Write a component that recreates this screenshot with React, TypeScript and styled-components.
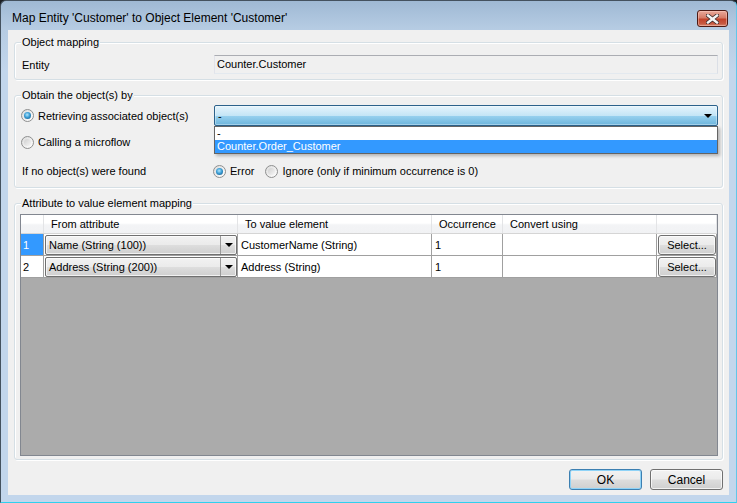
import React from "react";
import styled, { createGlobalStyle } from "styled-components";

/* ─────────────────── data ─────────────────── */

const COLUMNS = [
  { title: "", width: 23 },
  { title: "From attribute", width: 194 },
  { title: "To value element", width: 194 },
  { title: "Occurrence", width: 71 },
  { title: "Convert using", width: 154 },
  { title: "", width: 60 },
];

const gridCols = COLUMNS.map((c) => `${c.width}px`).join(" ");

const rows = [
  { from: "Name (String (100))", to: "CustomerName (String)", occurrence: "1", selected: true },
  { from: "Address (String (200))", to: "Address (String)", occurrence: "1", selected: false },
];

/* ─────────────────── component ─────────────────── */

export default function App() {
  return (
    <>
      <GlobalStyle />
      <Window>
        <TitleBar>
          <Title>Map Entity 'Customer' to Object Element 'Customer'</Title>
          <CloseButton aria-label="Close">
            <svg width="13" height="10" viewBox="0 0 13 10">
              <path d="M2 1.5 L11 8.5 M11 1.5 L2 8.5" stroke="#3b2a2a" strokeWidth="4" strokeLinecap="square" />
              <path d="M2 1.5 L11 8.5 M11 1.5 L2 8.5" stroke="#f4f4f4" strokeWidth="2.4" strokeLinecap="square" />
            </svg>
          </CloseButton>
        </TitleBar>

        <Client>
          {/* object mapping */}
          <Group $pl={7}>
            <Legend>Object mapping</Legend>
            <FormRow>
              <span>Entity</span>
              <TextField>Counter.Customer</TextField>
            </FormRow>
          </Group>

          {/* obtain by */}
          <Group $pl={7} $pt={2} $pb={6}>
            <Legend>Obtain the object(s) by</Legend>
            <FormRow $h={21}>
              <RadioLabel>
                <Radio $checked />
                Retrieving associated object(s)
              </RadioLabel>
              <ComboWrap>
                <OpenCombo>
                  <span>-</span>
                  <Caret />
                </OpenCombo>
                <DropList>
                  <DropItem>-</DropItem>
                  <DropItem $active>Counter.Order_Customer</DropItem>
                </DropList>
              </ComboWrap>
            </FormRow>
            <FormRow $h={20} $mt={6}>
              <RadioLabel>
                <Radio />
                Calling a microflow
              </RadioLabel>
              <span />
            </FormRow>
            <FormRow $h={20} $mt={9}>
              <span>If no object(s) were found</span>
              <RadioGroup>
                <RadioLabel>
                  <Radio $checked />
                  Error
                </RadioLabel>
                <RadioLabel>
                  <Radio />
                  Ignore (only if minimum occurrence is 0)
                </RadioLabel>
              </RadioGroup>
            </FormRow>
          </Group>

          {/* attribute mapping */}
          <Group $pl={5} $pt={3} $pb={3} $grow>
            <Legend $ml={2}>Attribute to value element mapping</Legend>
            <DataGrid>
              <HeaderRow>
                {COLUMNS.map((c, i) => (
                  <HeaderCell key={i}>{c.title}</HeaderCell>
                ))}
              </HeaderRow>
              {rows.map((r, i) => (
                <DataRow key={i}>
                  <RowHeader $selected={r.selected}>{i + 1}</RowHeader>
                  <Cell $pad={0}>
                    <CellCombo>
                      <span>{r.from}</span>
                      <CellComboArrow>
                        <Caret />
                      </CellComboArrow>
                    </CellCombo>
                  </Cell>
                  <Cell>{r.to}</Cell>
                  <Cell>{r.occurrence}</Cell>
                  <Cell />
                  <Cell $pad={0}>
                    <SelectButton>Select...</SelectButton>
                  </Cell>
                </DataRow>
              ))}
              <EmptyArea />
            </DataGrid>
          </Group>

          <ButtonBar>
            <DialogButton $default>OK</DialogButton>
            <DialogButton>Cancel</DialogButton>
          </ButtonBar>
        </Client>
      </Window>
    </>
  );
}

/* ───────────── styled components ───────────── */

const GlobalStyle = createGlobalStyle`
  html, body {
    margin: 0;
    padding: 0;
    background: #1b1f24;
  }
  body {
    font-family: "Liberation Sans", Arial, sans-serif;
    font-size: 11px;
    color: #000;
  }
  *, *::before, *::after {
    box-sizing: border-box;
  }
`;

const Window = styled.div`
  width: 737px;
  height: 503px;
  display: flex;
  flex-direction: column;
  border: 1px solid #44525f;
  border-right-color: #62c6e8;
  border-bottom-color: #2fd0ee;
  border-radius: 6px 6px 0 0;
  background: linear-gradient(180deg, #9fb9d4 0px, #b6cce3 28px, #c2d6ec 70px, #c2d6ec 100%);
  overflow: hidden;
`;

const TitleBar = styled.div`
  height: 29px;
  flex: none;
  display: flex;
  align-items: flex-start;
  padding: 10px 8px 0 11px;
`;

const Title = styled.div`
  flex: 1;
  font-size: 12px;
  line-height: 15px;
  color: #000;
`;

const CloseButton = styled.button`
  width: 31px;
  height: 17px;
  margin-top: -1px;
  padding: 0;
  display: flex;
  align-items: center;
  justify-content: center;
  border: 1px solid #4d1a14;
  border-radius: 3px;
  background: linear-gradient(180deg, #e9a99b 0%, #d67c68 45%, #c2432b 55%, #c75a42 85%, #d88a72 100%);
  box-shadow: inset 0 0 0 1px rgba(255, 210, 200, 0.45);
`;

const Client = styled.div`
  flex: 1;
  margin: 0 7px 7px 7px;
  background: #f0f0f0;
  display: flex;
  flex-direction: column;
  padding: 5px 6px 5px 6px;
`;

const Group = styled.fieldset<{ $pl?: number; $pt?: number; $pb?: number; $grow?: boolean }>`
  margin: 0 0 8px 0;
  min-width: 0;
  border: 1px solid #d5dfe5;
  border-radius: 3px;
  box-shadow: inset 1px 1px 0 #fff, 1px 1px 0 #fff;
  padding: ${(p) => p.$pt ?? 5}px 4px ${(p) => p.$pb ?? 5}px ${(p) => p.$pl ?? 7}px;
  ${(p) =>
    p.$grow &&
    `
    flex: 1;
    display: flex;
    flex-direction: column;
    margin-bottom: 9px;
  `}
`;

const Legend = styled.legend<{ $ml?: number }>`
  padding: 0 1px;
  margin-left: ${(p) => (p.$ml ?? 0) - 1}px;
  line-height: 15px;
  background: #f0f0f0;
`;

const FormRow = styled.div<{ $h?: number; $mt?: number }>`
  display: grid;
  grid-template-columns: 192px 1fr;
  align-items: center;
  height: ${(p) => p.$h ?? 19}px;
  margin-top: ${(p) => p.$mt ?? 0}px;
`;

const TextField = styled.div`
  height: 19px;
  line-height: 17px;
  padding: 0 2px;
  border: 1px solid;
  border-color: #abadb3 #dbdfe6 #e3e9ef #e2e3ea;
  background: #f0f0f0;
`;

const RadioLabel = styled.label`
  display: flex;
  align-items: center;
  gap: 4px;
  white-space: nowrap;
`;

const RadioGroup = styled.div`
  display: flex;
  align-items: center;
  gap: 12px;
`;

const Radio = styled.span<{ $checked?: boolean }>`
  position: relative;
  flex: none;
  width: 13px;
  height: 13px;
  margin-left: -1px;
  border-radius: 50%;
  border: 1px solid #8e8f8f;
  background: linear-gradient(135deg, #dcdcdc, #ffffff);
  &::after {
    content: "";
    position: absolute;
    inset: 2px;
    border-radius: 50%;
    background: ${(p) =>
      p.$checked
        ? "radial-gradient(circle at 45% 40%, #b4e6fc 0%, #3c9fd6 45%, #0f4d7c 100%)"
        : "linear-gradient(135deg, #cfcfcf, #f6f6f6)"};
  }
`;

const ComboWrap = styled.div`
  position: relative;
  height: 21px;
`;

const OpenCombo = styled.div`
  height: 21px;
  display: flex;
  align-items: center;
  justify-content: space-between;
  padding: 0 5px 0 3px;
  border: 1px solid #2c628b;
  border-radius: 2px;
  background: linear-gradient(180deg, #e5f4fc 0%, #c4e5f6 50%, #98d1ef 51%, #6db5dc 100%);
  box-shadow: inset 0 0 0 1px rgba(255, 255, 255, 0.35);
`;

const Caret = styled.span`
  width: 0;
  height: 0;
  border-left: 4px solid transparent;
  border-right: 4px solid transparent;
  border-top: 4px solid #000;
`;

const DropList = styled.div`
  position: absolute;
  top: 100%;
  left: 0;
  right: 0;
  z-index: 5;
  background: #fff;
  border: 1px solid #646464;
  padding: 0;
  box-shadow: 2px 2px 3px rgba(0, 0, 0, 0.25);
`;

const DropItem = styled.div<{ $active?: boolean }>`
  height: 13px;
  line-height: 13px;
  padding-left: 2px;
  background: ${(p) => (p.$active ? "#3399ff" : "#fff")};
  color: ${(p) => (p.$active ? "#fff" : "#000")};
`;

const DataGrid = styled.div`
  flex: 1;
  display: flex;
  flex-direction: column;
  border: 1px solid #828790;
  background: #ababab;
`;

const HeaderRow = styled.div`
  display: grid;
  grid-template-columns: ${gridCols};
  height: 19px;
  background: linear-gradient(180deg, #ffffff 0%, #ffffff 45%, #f3f4f6 55%, #f1f2f4 100%);
  border-bottom: 1px solid #d5d5d5;
`;

const HeaderCell = styled.div`
  display: flex;
  align-items: center;
  padding-left: 7px;
  border-right: 1px solid #e3e4e6;
  white-space: nowrap;
`;

const DataRow = styled.div`
  display: grid;
  grid-template-columns: ${gridCols};
  height: 22px;
  background: #fff;
`;

const Cell = styled.div<{ $pad?: number }>`
  display: flex;
  align-items: center;
  padding-left: ${(p) => p.$pad ?? 3}px;
  border-right: 1px solid #a0a0a0;
  border-bottom: 1px solid #a0a0a0;
  white-space: nowrap;
  overflow: hidden;
`;

const RowHeader = styled(Cell)<{ $selected?: boolean }>`
  padding-left: 2px;
  background: ${(p) => (p.$selected ? "#3399ff" : "#fff")};
  color: ${(p) => (p.$selected ? "#fff" : "#000")};
`;

const winButton = `
  border: 1px solid #707070;
  border-radius: 3px;
  background: linear-gradient(180deg, #f2f2f2 0%, #ebebeb 48%, #dddddd 52%, #cfcfcf 100%);
  box-shadow: inset 0 0 0 1px rgba(255, 255, 255, 0.7);
  font-family: "Liberation Sans", Arial, sans-serif;
  font-size: 11px;
  color: #000;
  padding: 0;
`;

const CellCombo = styled.div`
  ${winButton};
  border-radius: 2px;
  margin: 1px 0 1px 1px;
  height: 20px;
  width: 100%;
  display: flex;
  align-items: center;
  padding-left: 3px;
  justify-content: space-between;
`;

const CellComboArrow = styled.span`
  width: 16px;
  height: 100%;
  display: flex;
  align-items: center;
  justify-content: center;
  border-left: 1px solid #9a9a9a;
`;

const SelectButton = styled.button`
  ${winButton};
  margin: 1px 0 1px 1px;
  width: 58px;
  height: 20px;
`;

const EmptyArea = styled.div`
  flex: 1;
`;

const ButtonBar = styled.div`
  display: flex;
  justify-content: flex-end;
  gap: 8px;
`;

const DialogButton = styled.button<{ $default?: boolean }>`
  ${winButton};
  width: 73px;
  height: 21px;
  font-size: 12px;
  ${(p) =>
    p.$default &&
    `
    border-color: #3c7fb1;
    box-shadow: inset 0 0 0 1px #8fd3f7;
  `}
`;
